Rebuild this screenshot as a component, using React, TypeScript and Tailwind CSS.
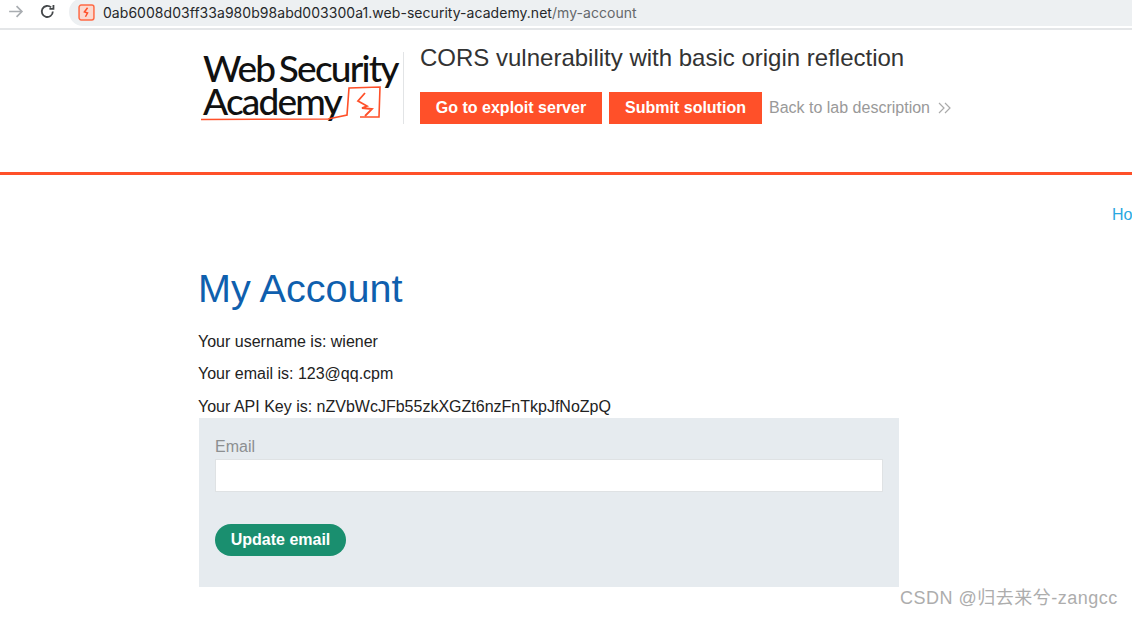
import React from 'react'

const sans = '[font-family:"Liberation_Sans",Arial,sans-serif]'

const LogoMark = () => (
  <svg width="202" height="72" viewBox="0 0 202 72" fill="none" className="absolute left-0 top-0">
    <path d="M0 67.5 L127 67 L146 63 L148 36 L179 35 L178 65 L159 65" stroke="#ff5029" strokeWidth="1.6" />
    <path d="M164 41 L157 49 L166 54 L161 56 L171 57 L164 64" stroke="#ff5029" strokeWidth="1.8" />
  </svg>
)

const Logo = () => (
  <div className="relative h-[72px] w-[202px] shrink-0 text-[#111]">
    <div className="text-[37px] leading-[33px] tracking-[-1.8px] whitespace-nowrap font-medium font-['Lato',sans-serif] [word-spacing:-3px] pl-[2px] -mt-[1px]">
      <div>Web Security</div>
      <div>Academy</div>
    </div>
    <LogoMark />
  </div>
)

const App = () => {
  return (
    <div className={`h-[618px] w-[1132px] overflow-hidden bg-white ${sans} text-[#222]`}>
      {/* browser bar */}
      <div className="flex h-[30px] items-center border-b-2 border-[#e4e6e8]">
        <div className="flex w-[69px] shrink-0 items-center pl-[7px] gap-[15px] -mt-[6px]">
          <svg width="17" height="17" viewBox="0 0 16 16" fill="none" stroke="#a9adb1" strokeWidth="1.6">
            <path d="M2 8 H14 M9 3 L14 8 L9 13" />
          </svg>
          <svg width="17" height="17" viewBox="0 0 16 16" fill="none" stroke="#44474a" strokeWidth="1.7">
            <path d="M13 8 A5.2 5.2 0 1 1 11.4 4.2" />
            <path d="M9.8 5.6 H13.6 V1.8" />
          </svg>
        </div>
        <div className="flex h-[28px] flex-1 items-center rounded-l-[14px] bg-[#edf0f2] pl-[9px] -mt-[4px]">
          <svg width="17" height="17" viewBox="0 0 16 16" fill="none" className="mr-[8px] shrink-0">
            <rect x="1" y="1" width="14" height="14" rx="2" fill="#fbd9cf" stroke="#ff6a45" strokeWidth="1.4" />
            <path d="M9 3.5 L6 7.5 L9 8.5 L7 12" stroke="#ff5029" strokeWidth="1.4" />
          </svg>
          <span className="text-[14px] text-[#26282a] whitespace-nowrap font-['Inter',sans-serif] tracking-[0.04px]">
            0ab6008d03ff33a980b98abd003300a1.web-security-academy.net<span className="text-[#65686b]">/my-account</span>
          </span>
        </div>
      </div>

      {/* lab header */}
      <header className="flex h-[145px] border-b-[3px] border-[#ff5029] pl-[201px] pt-[22px]">
        <Logo />
        <div className="h-[72px] w-px bg-[#e2e4e6]" />
        <div className="pl-[16px]">
          <h2 className="text-[24px] leading-[30px] -mt-[9px] text-[#333]">CORS vulnerability with basic origin reflection</h2>
          <div className="mt-[19px] flex items-center">
            <a className="flex h-[32px] w-[182px] items-center justify-center bg-[#ff5029] text-[16px] font-bold text-white">Go to exploit server</a>
            <a className="ml-[7px] flex h-[32px] w-[153px] items-center justify-center bg-[#ff5029] text-[16px] font-bold text-white">Submit solution</a>
            <a className="ml-[7px] flex items-center text-[16px] text-[#999]">
              Back to lab description
              <svg width="14" height="12" viewBox="0 0 14 12" fill="none" stroke="#aaa" strokeWidth="1.2" className="ml-[8px]">
                <path d="M1 1 L6 6 L1 11 M7 1 L12 6 L7 11" />
              </svg>
            </a>
          </div>
        </div>
      </header>

      {/* nav */}
      <div className="flex h-[40px] pl-[1112px] pt-[28px] text-[16px] leading-[24px] text-[#29a7e1] whitespace-nowrap">Home</div>

      <main className="ml-[199px] mt-[50px] w-[700px]">
        <h1 className="text-[39.6px] leading-[46px] -ml-[1px] text-[#0f5fae]">My Account</h1>
        <p className="mt-[21px] -ml-px text-[16px] leading-[20px]">Your username is: wiener</p>
        <p className="mt-[12px] -ml-px text-[16px] leading-[20px]">Your email is: 123@qq.cpm</p>
        <p className="mt-[13px] -ml-px text-[16px] leading-[20px]">Your API Key is: nZVbWcJFb55zkXGZt6nzFnTkpJfNoZpQ</p>
        <form className="mt-[1px] h-[169px] bg-[#e6ebef] px-[16px] pt-[19px]">
          <label className="block text-[16px] leading-[20px] text-[#8c8f91]">Email</label>
          <input className="mt-[2px] block h-[33px] w-[668px] border border-[#dfe2e4] bg-white" />
          <button type="button" className="mt-[32px] flex h-[32px] w-[131px] items-center justify-center rounded-full bg-[#1a8f6f] text-[16px] font-bold text-white">
            Update email
          </button>
        </form>
      </main>

      <div className="absolute left-[900px] top-[587px] text-[18px] leading-[22px] tracking-[0.5px] whitespace-nowrap text-[#adadad] font-['Liberation_Sans','Noto_Sans_CJK_SC',sans-serif]">
        CSDN @归去来兮-zangcc
      </div>
    </div>
  )
}

export default App
